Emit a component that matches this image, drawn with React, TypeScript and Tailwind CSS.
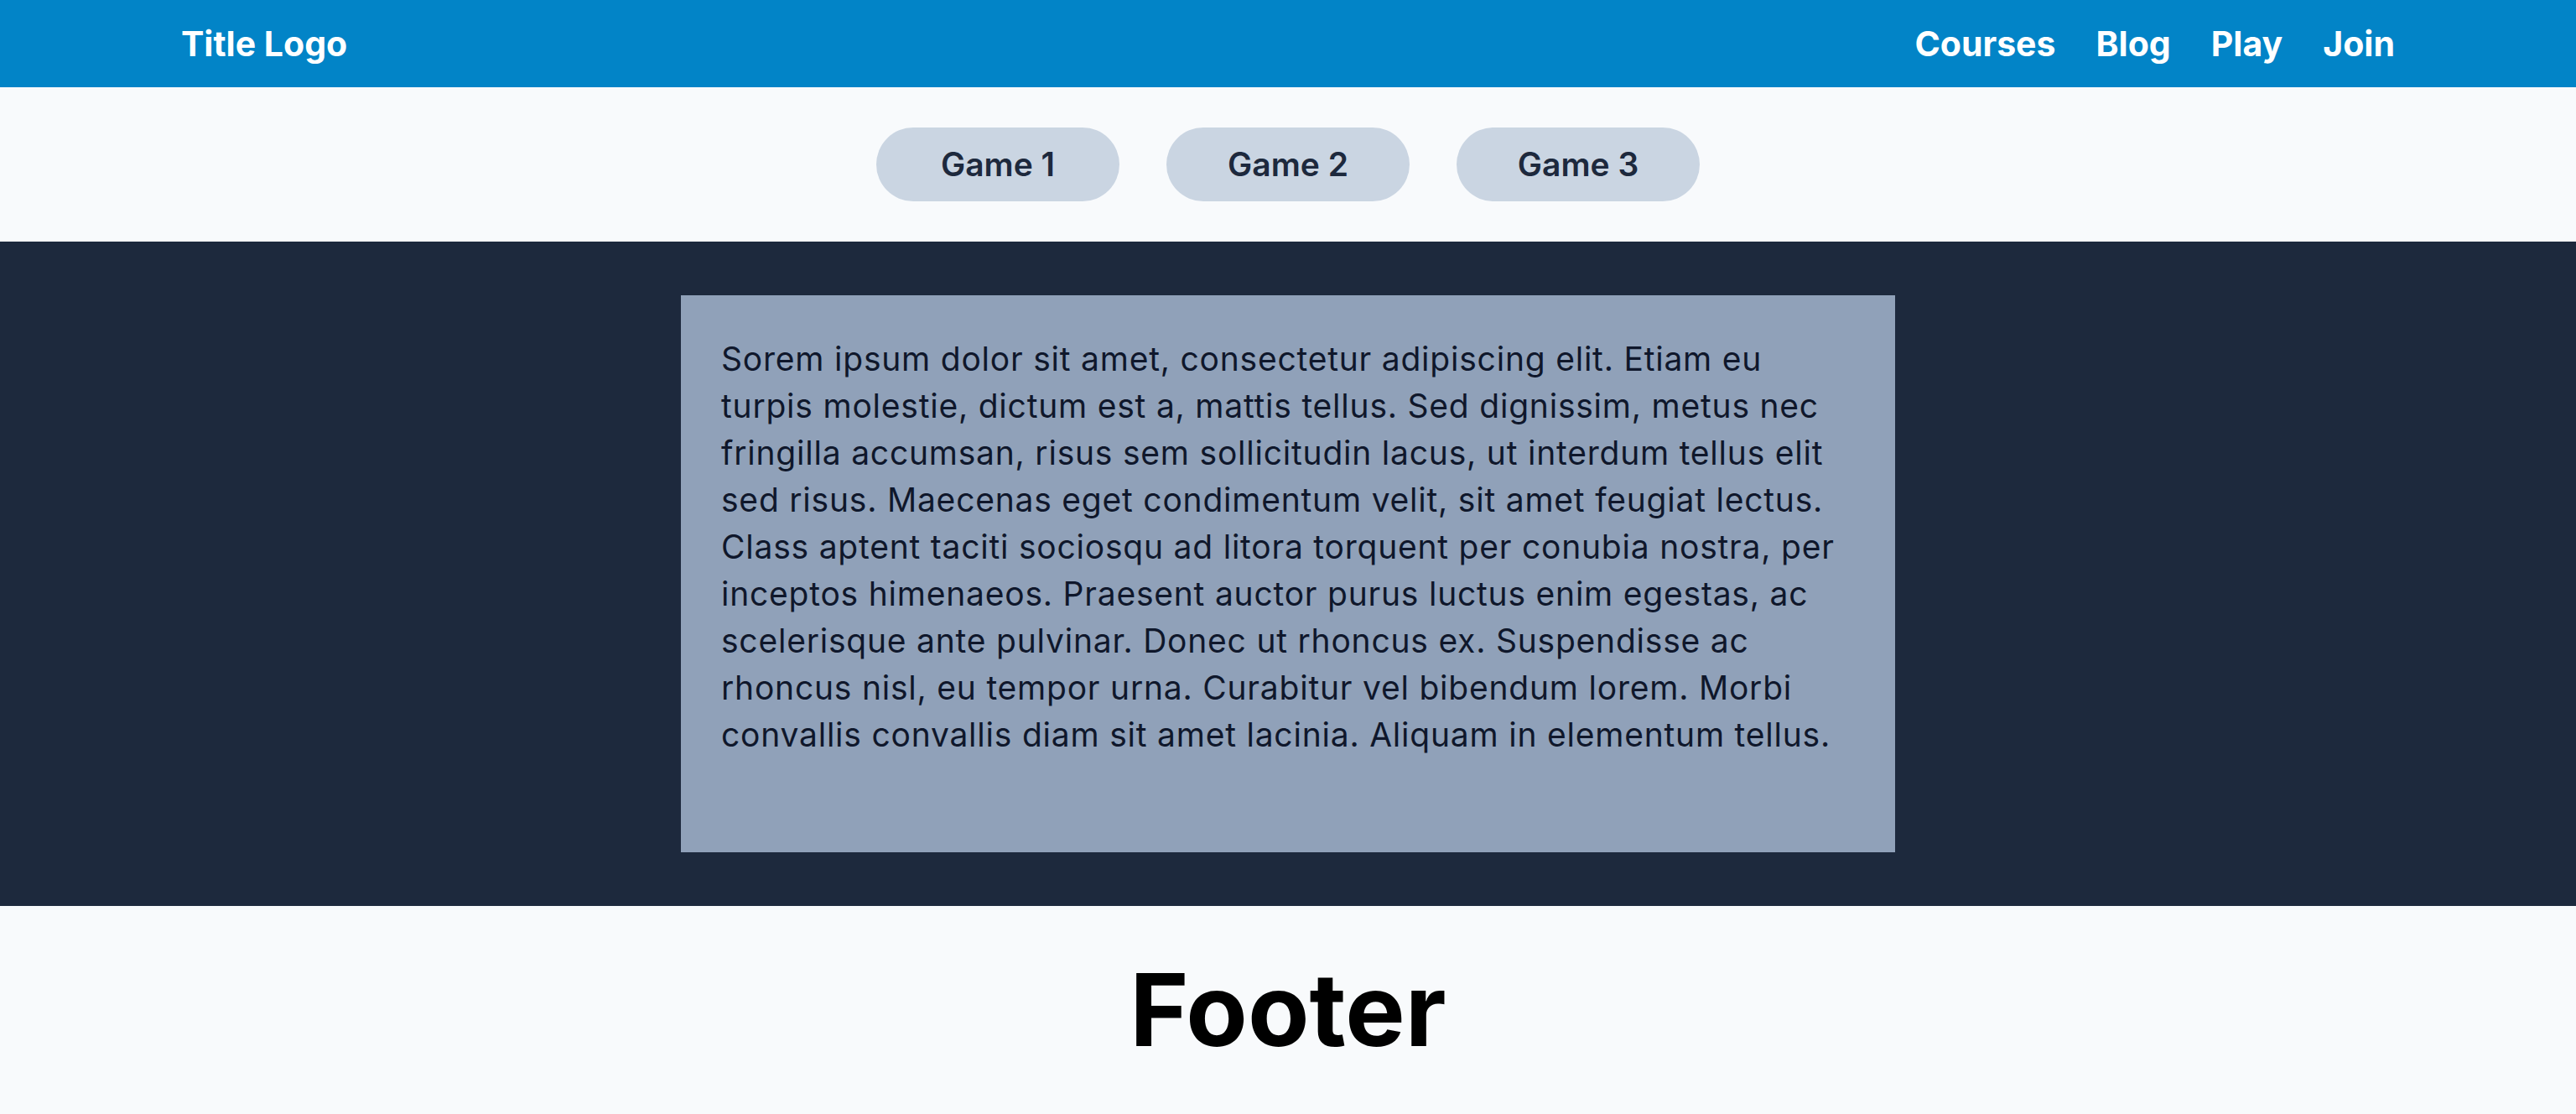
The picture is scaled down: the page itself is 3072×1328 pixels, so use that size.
const navLinks = ['Courses', 'Blog', 'Play', 'Join'];
const games = ['Game 1', 'Game 2', 'Game 3'];

const loremText =
  'Sorem ipsum dolor sit amet, consectetur adipiscing elit. Etiam eu turpis molestie, dictum est a, mattis tellus. Sed dignissim, metus nec fringilla accumsan, risus sem sollicitudin lacus, ut interdum tellus elit sed risus. Maecenas eget condimentum velit, sit amet feugiat lectus. Class aptent taciti sociosqu ad litora torquent per conubia nostra, per inceptos himenaeos. Praesent auctor purus luctus enim egestas, ac scelerisque ante pulvinar. Donec ut rhoncus ex. Suspendisse ac rhoncus nisl, eu tempor urna. Curabitur vel bibendum lorem. Morbi convallis convallis diam sit amet lacinia. Aliquam in elementum tellus.';

const Header = () => (
  <header className="bg-[#0284c7] text-white">
    <div className="flex items-center justify-between px-[216px] py-6 text-[41px] leading-[56px] font-bold">
      <a href="#">Title Logo</a>
      <nav className="flex gap-12">
        {navLinks.map((link) => (
          <a key={link} href="#">
            {link}
          </a>
        ))}
      </nav>
    </div>
  </header>
);

const GameBar = () => (
  <div className="flex justify-center gap-14 bg-slate-50 py-12">
    {games.map((game) => (
      <button
        key={game}
        type="button"
        className="h-[88px] w-[290px] rounded-full bg-slate-300 text-[39px] leading-[56px] font-semibold text-slate-800"
      >
        {game}
      </button>
    ))}
  </div>
);

const Content = () => (
  <main className="flex justify-center bg-slate-800 py-16">
    <div className="h-[664px] w-[1448px] bg-slate-400 p-12">
      <p className="text-[39px] leading-[56px] tracking-[0.02em] text-slate-900">{loremText}</p>
    </div>
  </main>
);

const Footer = () => (
  <footer className="bg-slate-50 py-16 text-center">
    <h2 className="text-[120px] leading-[120px] font-bold text-black">Footer</h2>
  </footer>
);

export default function App() {
  return (
    <div className="min-h-screen bg-slate-50 font-['Inter',sans-serif]">
      <Header />
      <GameBar />
      <Content />
      <Footer />
    </div>
  );
}
